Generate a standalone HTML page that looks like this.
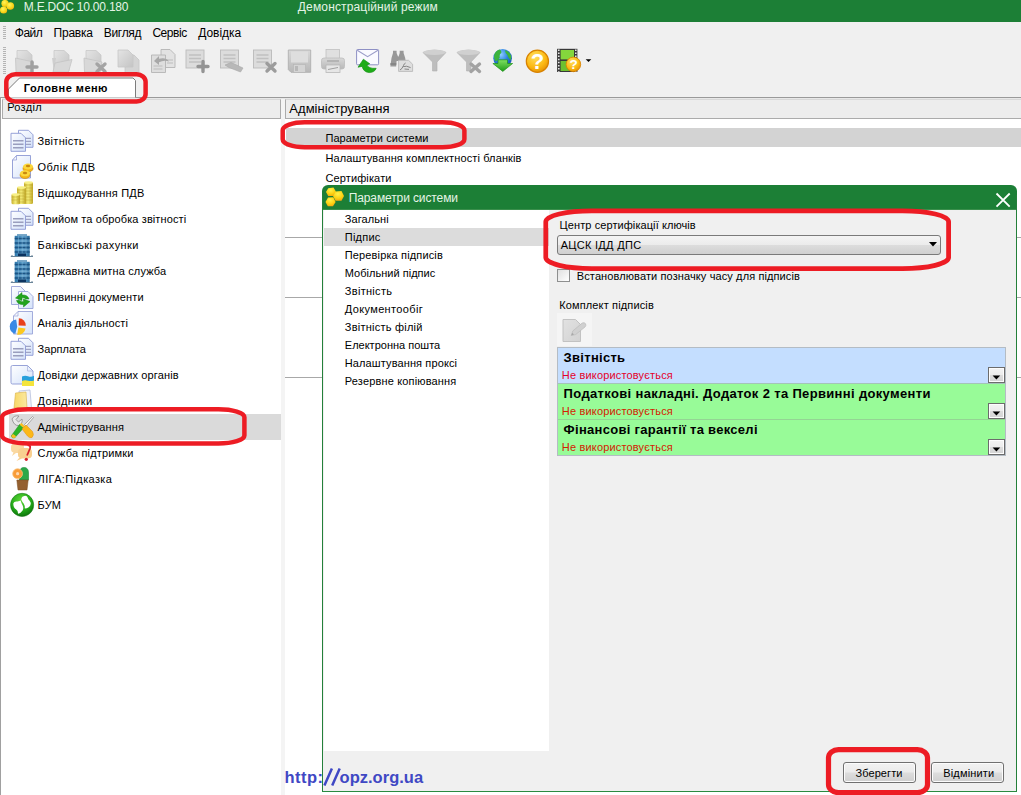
<!DOCTYPE html>
<html><head><meta charset="utf-8"><title>M.E.DOC</title>
<style>
html,body{margin:0;padding:0;background:#fff;}
body{width:1021px;height:795px;overflow:hidden;font-family:"Liberation Sans",sans-serif;}
#root{position:relative;width:1021px;height:795px;overflow:hidden;background:#f0f0f0;}
#root div,#root svg{position:absolute;}
.t{position:absolute;white-space:pre;line-height:1;font-family:"Liberation Sans",sans-serif;}
.btn{box-sizing:border-box;border:1px solid #707070;border-radius:3px;background:linear-gradient(#f2f2f2 0%,#ebebeb 48%,#dddddd 52%,#cfcfcf 100%);box-shadow:inset 0 0 0 1px #fcfcfc;}
.dd{width:17px;height:16px;box-sizing:border-box;border:1px solid #6c6c6c;background:linear-gradient(#f4f4f4 0%,#ececec 48%,#dcdcdc 52%,#d4d4d4 100%);box-shadow:inset 0 0 0 1px #fdfdfd;}

</style></head><body>
<div id="root">
<!-- title bar -->
<div style="left:0;top:0;width:1021px;height:22px;background:#1c7f36"></div>
<!-- tab row line + headers -->
<div style="left:0;top:97px;width:1021px;height:1px;background:#9a9a9a"></div>
<div style="left:0;top:98px;width:1021px;height:1px;background:#e8e8e8"></div>
<div style="left:0;top:97px;width:1px;height:698px;background:#a0a0a0"></div>
<div style="left:1px;top:98px;width:1px;height:697px;background:#fff"></div>
<!-- left panel -->
<div style="left:2px;top:99px;width:279px;height:696px;background:#fff"></div>
<div style="left:2px;top:99px;width:279px;height:20px;background:#ededed;border:1px solid #ababab;border-top-color:#d8d8d8;box-sizing:border-box"></div>
<div style="left:9px;top:414px;width:273px;height:26px;background:#dadada"></div>
<!-- splitter -->
<div style="left:281px;top:99px;width:4px;height:696px;background:#f4f4f4"></div>
<!-- right panel -->
<div style="left:285px;top:99px;width:736px;height:696px;background:#fff"></div>
<div style="left:285px;top:99px;width:737px;height:20px;background:#ededed;border:1px solid #ababab;border-top-color:#d8d8d8;box-sizing:border-box"></div>
<div style="left:286px;top:128px;width:735px;height:19px;background:#d3d3d3"></div>
<div style="left:285px;top:237px;width:736px;height:1px;background:#a8a8a8"></div>
<div style="left:285px;top:297px;width:736px;height:1px;background:#a8a8a8"></div>
<div style="left:285px;top:377px;width:736px;height:1px;background:#a8a8a8"></div>
<!-- tab -->
<svg style="left:6px;top:76px" width="134" height="24" viewBox="0 0 134 24"><path d="M2.5 21.5 L2.5 13 L13.5 2 L127 2 L129.5 4.5 L129.5 21.5 Z" fill="#fff"/><path d="M2.5 21.5 L2.5 13 L13.5 2 L127 2 L129.5 4.5 L129.5 21.5" fill="none" stroke="#7c7c7c" stroke-width="1"/></svg>
<!-- dialog -->
<div style="left:322px;top:185px;width:695px;height:607px;background:#f0f0f0;border-radius:6px 6px 0 0"></div>
<div style="left:322px;top:185px;width:695px;height:25px;background:#1c7f36;border-radius:6px 6px 0 0"></div>
<div style="left:322px;top:209px;width:695px;height:1px;background:#3a8f4c"></div>
<div style="left:322px;top:195px;width:1px;height:597px;background:#24803a"></div>
<div style="left:1016px;top:195px;width:1px;height:597px;background:#24803a"></div>
<div style="left:322px;top:791px;width:695px;height:1px;background:#2a8a40"></div>
<div style="left:324px;top:210px;width:225px;height:541px;background:#fff"></div>
<div style="left:324px;top:228px;width:225px;height:18px;background:#dcdcdc"></div>
<div style="left:322px;top:792px;width:699px;height:3px;background:#fff"></div>
<!-- dialog logo -->
<svg style="left:324px;top:186px" width="22" height="22" viewBox="324 186 22 22">
<defs><radialGradient id="hg2" cx="0.45" cy="0.3" r="0.85"><stop offset="0" stop-color="#fff24a"/><stop offset="0.55" stop-color="#fcd010"/><stop offset="1" stop-color="#f09010"/></radialGradient></defs>
<path d="M328.2 188.2 L333.5 187.6 L336 191.8 L333.6 196 L328.2 196 L326 192 Z" fill="url(#hg2)"/>
<path d="M335.5 191.5 L341.5 191 L344 196 L341.5 200.8 L335.5 200.8 L333 196 Z" fill="url(#hg2)"/>
<path d="M328 197.5 L333.3 197.3 L335.6 202 L333 206.3 L327.8 206.3 L325.5 202 Z" fill="url(#hg2)"/>
</svg>
<!-- close X -->
<svg style="left:994px;top:191px" width="18" height="18" viewBox="994 191 18 18"><path d="M996.5 193.5 L1009.7 206.7 M1009.7 193.5 L996.5 206.7" stroke="#fff" stroke-width="1.8" fill="none"/></svg>
<!-- combo -->
<div style="left:557px;top:235px;width:384px;height:20px;box-sizing:border-box;border:1px solid #7a7a7a;border-radius:3px;background:linear-gradient(#f4f4f4 0%,#ebebeb 50%,#dcdcdc 51%,#d0d0d0 100%)"></div>
<svg style="left:928px;top:241px" width="10" height="7" viewBox="0 0 10 7"><path d="M1 1 L9 1 L5 5.5 Z" fill="#000"/></svg>
<!-- checkbox -->
<div style="left:557px;top:269px;width:13px;height:13px;box-sizing:border-box;border:1px solid #8e8f8f;background:linear-gradient(135deg,#e0e0e0,#fff)"></div>
<!-- icon button -->
<div style="left:557px;top:313px;width:35px;height:33px;background:#f5f5f5"></div>
<svg style="left:560px;top:316px" width="30" height="28" viewBox="560 316 30 28">
<defs><linearGradient id="pg" x1="0" y1="0" x2="1" y2="1"><stop offset="0" stop-color="#e2e2e2"/><stop offset="1" stop-color="#d2d2d2"/></linearGradient></defs>
<path d="M563 319.5 L575.5 319.5 L580.5 324.5 L580.5 341.5 L563 341.5 Z" fill="url(#pg)" stroke="#c2c2c2" stroke-width="1"/>
<path d="M571.2 335.6 L572.8 331 L582.2 323 Q584.4 322 585.6 323.8 Q586.4 325.6 585 327 L575.6 334.6 Z" fill="#d0d0d0" stroke="#bababa" stroke-width="0.7"/>
<path d="M571.2 335.6 L572.2 332.8 L574 334.6 Z" fill="#a8a8a8"/>
</svg>
<!-- table -->
<div style="left:557px;top:347px;width:449px;height:109px;background:#b4bcc4"></div>
<div style="left:558px;top:348px;width:447px;height:35px;background:#c4deff"></div>
<div style="left:558px;top:383px;width:447px;height:36px;background:#98fb98"></div>
<div style="left:558px;top:419px;width:447px;height:36px;background:#98fb98"></div>
<div style="left:558px;top:383px;width:447px;height:1px;background:#a4c4b8"></div>
<div style="left:558px;top:419px;width:447px;height:1px;background:#94d494"></div>
<div class="dd" style="left:988px;top:367px"></div><svg style="left:992px;top:374.5px" width="9" height="6" viewBox="0 0 9 6"><path d="M0.6 0.5 L8.2 0.5 L4.4 4.6 Z" fill="#000"/></svg>
<div class="dd" style="left:988px;top:403px"></div><svg style="left:992px;top:410.5px" width="9" height="6" viewBox="0 0 9 6"><path d="M0.6 0.5 L8.2 0.5 L4.4 4.6 Z" fill="#000"/></svg>
<div class="dd" style="left:988px;top:439px"></div><svg style="left:992px;top:446.5px" width="9" height="6" viewBox="0 0 9 6"><path d="M0.6 0.5 L8.2 0.5 L4.4 4.6 Z" fill="#000"/></svg>
<!-- buttons -->
<div class="btn" style="left:843px;top:762px;width:73px;height:21px"></div>
<div class="btn" style="left:931px;top:762px;width:73px;height:21px"></div>
<!-- grips -->
<div style="left:3px;top:26px;width:3px;height:14px;background:repeating-linear-gradient(#b4b4b4 0 1px,#f0f0f0 1px 2px)"></div>
<div style="left:3px;top:47px;width:3px;height:27px;background:repeating-linear-gradient(#b4b4b4 0 1px,#f0f0f0 1px 2px)"></div>
<!-- app logo -->
<svg style="left:0;top:0" width="20" height="16" viewBox="0 0 20 16">
<defs><radialGradient id="hg" cx="0.4" cy="0.35" r="0.8"><stop offset="0" stop-color="#fff45a"/><stop offset="0.6" stop-color="#f8d416"/><stop offset="1" stop-color="#e89a10"/></radialGradient></defs>
<circle cx="5" cy="3.5" r="3.6" fill="url(#hg)"/><circle cx="10.3" cy="6" r="3.8" fill="url(#hg)"/><circle cx="3.6" cy="10" r="3.6" fill="url(#hg)"/>
</svg>
<!-- toolbar icons -->
<svg style="left:0;top:44px" width="620" height="34" viewBox="0 44 620 34">
<defs>
<linearGradient id="gg" x1="0" y1="0" x2="1" y2="1"><stop offset="0" stop-color="#e4e4e4"/><stop offset="1" stop-color="#c4c4c4"/></linearGradient>
<linearGradient id="gg2" x1="0" y1="0" x2="0" y2="1"><stop offset="0" stop-color="#d8d8d8"/><stop offset="1" stop-color="#b8b8b8"/></linearGradient>
<radialGradient id="yel" cx="0.4" cy="0.3" r="0.8"><stop offset="0" stop-color="#ffe060"/><stop offset="0.6" stop-color="#fcb812"/><stop offset="1" stop-color="#e08800"/></radialGradient>
<radialGradient id="glb" cx="0.4" cy="0.3" r="0.8"><stop offset="0" stop-color="#8fd0ff"/><stop offset="0.5" stop-color="#2a7fe0"/><stop offset="1" stop-color="#1448a8"/></radialGradient>
<linearGradient id="grn" x1="0" y1="0" x2="0" y2="1"><stop offset="0" stop-color="#7fe060"/><stop offset="1" stop-color="#1f9c18"/></linearGradient>
</defs>
<!-- 1 folder-doc plus -->
<g>
<path d="M17 50.5 L27 50.5 L32 55 L32 71 L17 71 Z" fill="url(#gg)" stroke="#c8c8c8" stroke-width="0.8"/>
<path d="M15.5 58 L33.5 62 L31 72 L16 72 Z" fill="#d8d8d8" stroke="#c4c4c4" stroke-width="0.8"/>
<path d="M32 62 L32 72 M27 67 L37 67" stroke="#a0a0a0" stroke-width="3.4" stroke-linecap="round"/>
</g>
<!-- 2 folder open -->
<g>
<path d="M54 50.5 L64 50.5 L69 55 L69 71 L54 71 Z" fill="url(#gg)" stroke="#c8c8c8" stroke-width="0.8"/>
<path d="M52 58 L56 58 L54 72 Z" fill="#cfcfcf"/>
<path d="M55 63 L72 59.5 L68.5 72 L53 72 Z" fill="#d8d8d8" stroke="#c4c4c4" stroke-width="0.8"/>
</g>
<!-- 3 folder x -->
<g>
<path d="M86 50.5 L96 50.5 L101 55 L101 71 L86 71 Z" fill="url(#gg)" stroke="#c8c8c8" stroke-width="0.8"/>
<path d="M84 58 L102 62 L100 72 L84.5 72 Z" fill="#d8d8d8" stroke="#c4c4c4" stroke-width="0.8"/>
<path d="M97 64 L105 71.5 M105 64 L97 71.5" stroke="#a4a4a4" stroke-width="3.4" stroke-linecap="round"/>
</g>
<!-- 4 docs -->
<g>
<path d="M125 55 L134 55 L139 60 L139 73 L125 73 Z" fill="#d4d4d4" stroke="#c6c6c6" stroke-width="0.8"/>
<path d="M118 50 L128 50 L133 55 L133 67 L118 67 Z" fill="url(#gg)" stroke="#c6c6c6" stroke-width="0.8"/>
</g>
<!-- 5 docs with arrow -->
<g>
<path d="M161 49.5 L170 49.5 L175 54.5 L175 67.5 L161 67.5 Z" fill="#e2e2e2" stroke="#b4b4b4" stroke-width="0.9"/>
<path d="M151.5 55 L165.5 55 L165.5 72.5 L151.5 72.5 Z" fill="#dedede" stroke="#b4b4b4" stroke-width="0.9"/>
<path d="M153.5 66 h9 M153.5 69 h9 M167 60 h6 M167 63 h6" stroke="#bcbcbc" stroke-width="1"/>
<path d="M154 61 L159 56 L159 58.8 Q166 57 169 61.5 Q164 59.5 159 62.2 L159 65 Z" fill="#a8a8a8"/>
</g>
<!-- 6 list plus -->
<g>
<rect x="186" y="50" width="18" height="18" fill="#dcdcdc" stroke="#bababa" stroke-width="0.9"/>
<path d="M189 55 h12 M189 58.5 h12 M189 62 h12" stroke="#c0c0c0" stroke-width="1.4"/>
<path d="M203 61.5 L203 71.5 M198 66.5 L208 66.5" stroke="#949494" stroke-width="3.4" stroke-linecap="round"/>
</g>
<!-- 7 list pencil -->
<g>
<rect x="220.5" y="50" width="18" height="18" fill="#dcdcdc" stroke="#bababa" stroke-width="0.9"/>
<path d="M223.5 55 h12 M223.5 58.5 h12 M223.5 62 h12" stroke="#c0c0c0" stroke-width="1.4"/>
<path d="M225 65 L231 62.5 L243 68 L240.5 72 L229 67.5 Z" fill="#b8b8b8" stroke="#a8a8a8" stroke-width="0.6"/>
</g>
<!-- 8 list x -->
<g>
<rect x="253.5" y="50" width="18" height="18" fill="#dcdcdc" stroke="#bababa" stroke-width="0.9"/>
<path d="M256.5 55 h12 M256.5 58.5 h12 M256.5 62 h12" stroke="#c0c0c0" stroke-width="1.4"/>
<path d="M267 63.5 L275 71 M275 63.5 L267 71" stroke="#9c9c9c" stroke-width="3.4" stroke-linecap="round"/>
</g>
<!-- 9 floppy -->
<g>
<path d="M288.3 50 L310.7 50 L310.7 72.3 L291 72.3 L288.3 69.6 Z" fill="url(#gg2)" stroke="#b0b0b0" stroke-width="0.9"/>
<rect x="291" y="51.5" width="17" height="11" fill="#dedede"/>
<rect x="293.5" y="64.5" width="12" height="7.8" fill="#d4d4d4" stroke="#b4b4b4" stroke-width="0.6"/>
<rect x="295" y="66" width="3" height="5" fill="#b8b8b8"/>
</g>
<!-- 10 printer -->
<g>
<rect x="326" y="49.5" width="13.5" height="9" fill="#e0e0e0" stroke="#c0c0c0" stroke-width="0.8"/>
<rect x="321.5" y="58" width="23" height="11" rx="2.5" fill="url(#gg2)" stroke="#bcbcbc" stroke-width="0.8"/>
<rect x="327" y="60" width="12" height="2" fill="#b4b4b4"/>
<rect x="326" y="65" width="14" height="7.5" fill="#e6e6e6" stroke="#b8b8b8" stroke-width="0.8"/>
<path d="M328 69.5 L338 67.5" stroke="#a0a0a0" stroke-width="1"/>
</g>
<!-- 11 mail -->
<g>
<rect x="356.6" y="49.5" width="22" height="15.3" rx="1" fill="#fafaff" stroke="#8e90c4" stroke-width="1"/>
<path d="M357.2 50.3 L367.6 56.6 L378 50.3" fill="none" stroke="#9a9cc8" stroke-width="1.1"/>
<path d="M363.4 59.2 L369.8 63.8 L366.9 64.9 Q368.6 68.8 376.2 68.3 Q374.6 72.6 369 72.6 Q363.4 72 362.1 66.4 L358 67.2 Z" fill="#1eac18" stroke="#0f8c10" stroke-width="0.6"/>
</g>
<!-- 12 binoculars -->
<g>
<path d="M390.3 66.5 L391.5 58 L393 53 L393 50.8 L396.6 50.8 L396.6 53 L398 56.5 L398.6 56.5 L399.7 53 L399.7 50.8 L403.6 50.8 L403.6 53 L405.2 58 L406.3 66.5 L400.2 66.5 L399.8 61 L396.6 61 L396.2 66.5 Z" fill="#989898"/>
<path d="M390.3 64 h6 M400.2 64 h6" stroke="#808080" stroke-width="1.6"/>
<path d="M398.6 60.3 L408.5 60.3 L412.6 64.2 L412.6 71.4 L398.6 71.4 Z" fill="#dedede" stroke="#b4b4b4" stroke-width="0.8"/>
<path d="M400 70 Q402.2 69 403.5 65.5 Q404 63.6 405.6 63 M403.2 66.6 Q406.4 65.4 410.6 67.6 M404.5 69 L409 69.4" fill="none" stroke="#7c7c7c" stroke-width="0.9"/>
</g>
<!-- 13 funnel -->
<g>
<path d="M423 52.5 Q434.5 47.5 446 52.5 L437 62 L437 71 L432.5 71 L432.5 62 Z" fill="#bebebe" stroke="#b0b0b0" stroke-width="0.6"/>
<ellipse cx="434.5" cy="52.3" rx="11.3" ry="2.6" fill="#d0d0d0"/>
</g>
<!-- 14 funnel x -->
<g>
<path d="M457 52.5 Q468.5 47.5 480 52.5 L471 62 L471 71 L466.5 71 L466.5 62 Z" fill="#bebebe" stroke="#b0b0b0" stroke-width="0.6"/>
<ellipse cx="468.5" cy="52.3" rx="11.3" ry="2.6" fill="#d0d0d0"/>
<path d="M471 64 L479.5 71.5 M479.5 64 L471 71.5" stroke="#a2a2a2" stroke-width="3.4" stroke-linecap="round"/>
</g>
<!-- 15 globe -->
<g>
<circle cx="502.6" cy="58.2" r="9.3" fill="url(#glb)"/>
<path d="M494.2 55 Q495.5 51 499.5 49.6 Q502 50.5 501.2 53 Q499 54.5 499.8 57.5 Q498 60.5 495.5 61.5 Q493.6 58.5 494.2 55 Z M505 50 Q509.5 51.5 511 55.5 Q511.6 58 510.6 60 Q508 58 507.4 55 Q505 53 505 50 Z" fill="#3cb43c"/>
<path d="M498 59.8 L507.5 59.8 L507.5 63.5 L512.6 63.5 L502.8 71.4 L492.9 63.5 L498 63.5 Z" fill="url(#grn)" stroke="#1c9018" stroke-width="0.7"/>
</g>
<!-- 16 help -->
<g>
<circle cx="537.4" cy="61.2" r="11.1" fill="url(#yel)" stroke="#d88200" stroke-width="1.2"/>
<text x="537.6" y="69.4" font-family="Liberation Sans, sans-serif" font-weight="700" font-size="22" fill="#fff" text-anchor="middle">?</text>
</g>
<!-- 17 film help -->
<g>
<rect x="557.1" y="48.8" width="20.3" height="23.2" fill="#383838"/>
<rect x="560.6" y="50" width="13.4" height="9.4" fill="#84d63c"/>
<rect x="560.6" y="61" width="13.4" height="10" fill="#6cc030"/>
<path d="M558.8 49.4 v22.4 M575.8 49.4 v22.4" stroke="#f0f0f0" stroke-width="1.5" stroke-dasharray="1.5 1.6"/>
<circle cx="573.4" cy="64.4" r="7.3" fill="url(#yel)" stroke="#d88200" stroke-width="0.8"/>
<text x="573.5" y="69.4" font-family="Liberation Sans, sans-serif" font-weight="700" font-size="13.5" fill="#fff" text-anchor="middle">?</text>
</g>
<path d="M585.7 59.2 L591.3 59.2 L588.5 62.1 Z" fill="#000"/>
</svg>
<svg style="left:0;top:124px" width="44" height="400" viewBox="0 124 44 400">
<defs>
<linearGradient id="dg" x1="0" y1="0" x2="1" y2="1"><stop offset="0" stop-color="#ffffff"/><stop offset="1" stop-color="#d4e2fa"/></linearGradient>
<linearGradient id="coin" x1="0" y1="0" x2="1" y2="0"><stop offset="0" stop-color="#c8b030"/><stop offset="0.45" stop-color="#f4ec78"/><stop offset="1" stop-color="#c0a828"/></linearGradient>
<linearGradient id="bld" x1="0" y1="0" x2="1" y2="0"><stop offset="0" stop-color="#2e78ac"/><stop offset="0.6" stop-color="#5c9cc8"/><stop offset="1" stop-color="#2a6c9c"/></linearGradient>
<radialGradient id="gb" cx="0.45" cy="0.3" r="0.75"><stop offset="0" stop-color="#5fd838"/><stop offset="0.6" stop-color="#22a818"/><stop offset="1" stop-color="#0a6c0a"/></radialGradient>
<linearGradient id="fold" x1="0" y1="0" x2="1" y2="0"><stop offset="0" stop-color="#f8d868"/><stop offset="1" stop-color="#fbe9a0"/></linearGradient>


</defs>
<g transform="translate(0,129.8)">
<path d="M18.5 0.5 L28.5 0.5 L33 5 L33 17.5 L18.5 17.5 Z" fill="url(#dg)" stroke="#8c98d4" stroke-width="0.9"/>
<path d="M24 8.5 h7 M24 11.5 h7 M24 14.5 h7" stroke="#a0a4c4" stroke-width="1.2"/>
<path d="M11 3.5 L21 3.5 L25.5 8 L25.5 21.5 L11 21.5 Z" fill="url(#dg)" stroke="#8c98d4" stroke-width="0.9"/>
<path d="M13 11 h10.5 M13 14.5 h10.5 M13 18 h10.5" stroke="#9a9ebe" stroke-width="1.5"/>
</g>
<!-- doc + coins -->
<path d="M16.5 155.5 L30.5 155.5 L30.5 178 L12.5 178 L12.5 160 Z" fill="url(#dg)" stroke="#8c98d4" stroke-width="0.9"/>
<path d="M12.5 160 L16.5 160 L16.5 155.5" fill="none" stroke="#8c98d4" stroke-width="0.7"/>
<ellipse cx="28" cy="168.5" rx="5" ry="3.6" fill="#f4b418" stroke="#c88808" stroke-width="0.6"/>
<ellipse cx="28" cy="166.5" rx="5" ry="3" fill="#fcd83c"/>
<ellipse cx="28" cy="166" rx="2.2" ry="1.2" fill="#c88810"/>
<ellipse cx="25" cy="175" rx="5" ry="3.6" fill="#f4b418" stroke="#c88808" stroke-width="0.6"/>
<ellipse cx="25" cy="173.3" rx="5" ry="3" fill="#fcd83c"/>
<ellipse cx="25" cy="173" rx="2.2" ry="1.2" fill="#c88810"/>
<!-- coin stacks -->
<rect x="24" y="182" width="9" height="22" rx="1.5" fill="url(#coin)"/>
<rect x="17" y="187" width="9" height="17" rx="1.5" fill="url(#coin)"/>
<rect x="11.5" y="194" width="8.5" height="10.3" rx="1.5" fill="url(#coin)"/>
<path d="M24 185 h9 M24 188 h9 M24 191 h9 M24 194 h9 M24 197 h9 M24 200 h9 M17 190 h8 M17 193 h8 M17 196 h8 M17 199 h8 M17 202 h8 M11.5 197 h8 M11.5 200 h8" stroke="#b8a028" stroke-width="0.6" opacity="0.7"/>
<ellipse cx="28.5" cy="182.6" rx="4.5" ry="1.4" fill="#f8f088"/>
<ellipse cx="21.5" cy="187.6" rx="4.5" ry="1.4" fill="#f8f088"/>
<ellipse cx="15.7" cy="194.6" rx="4.2" ry="1.3" fill="#f8f088"/>
<g transform="translate(0,207.8)">
<path d="M18.5 0.5 L28.5 0.5 L33 5 L33 17.5 L18.5 17.5 Z" fill="url(#dg)" stroke="#8c98d4" stroke-width="0.9"/>
<path d="M24 8.5 h7 M24 11.5 h7 M24 14.5 h7" stroke="#a0a4c4" stroke-width="1.2"/>
<path d="M11 3.5 L21 3.5 L25.5 8 L25.5 21.5 L11 21.5 Z" fill="url(#dg)" stroke="#8c98d4" stroke-width="0.9"/>
<path d="M13 11 h10.5 M13 14.5 h10.5 M13 18 h10.5" stroke="#9a9ebe" stroke-width="1.5"/>
</g>
<g transform="translate(0,234)">
<rect x="17" y="0" width="10" height="2" fill="#7aa8c8"/>
<rect x="14.7" y="1.8" width="15" height="20.5" fill="url(#bld)"/>
<path d="M14.7 4.5 h15 M14.7 9 h15 M14.7 13.5 h15 M14.7 18 h15" stroke="#1c5484" stroke-width="1.6"/>
<path d="M14.7 7 h15 M14.7 11.3 h15 M14.7 15.8 h15" stroke="#8cc0e0" stroke-width="0.5"/>
<path d="M18.4 2 v17.5 M22.2 2 v17.5 M26 2 v17.5" stroke="#9accea" stroke-width="0.6" opacity="0.7"/>
<rect x="18" y="19.5" width="8" height="2.8" fill="#0c3460"/>
<path d="M10.8 22.5 H33 M12 21 v1.5 M32 21 v1.5" stroke="#6a8498" stroke-width="1"/>
</g>
<g transform="translate(0,260)">
<rect x="17" y="0" width="10" height="2" fill="#7aa8c8"/>
<rect x="14.7" y="1.8" width="15" height="20.5" fill="url(#bld)"/>
<path d="M14.7 4.5 h15 M14.7 9 h15 M14.7 13.5 h15 M14.7 18 h15" stroke="#1c5484" stroke-width="1.6"/>
<path d="M14.7 7 h15 M14.7 11.3 h15 M14.7 15.8 h15" stroke="#8cc0e0" stroke-width="0.5"/>
<path d="M18.4 2 v17.5 M22.2 2 v17.5 M26 2 v17.5" stroke="#9accea" stroke-width="0.6" opacity="0.7"/>
<rect x="18" y="19.5" width="8" height="2.8" fill="#0c3460"/>
<path d="M10.8 22.5 H33 M12 21 v1.5 M32 21 v1.5" stroke="#6a8498" stroke-width="1"/>
</g>
<!-- doc refresh -->
<path d="M11.5 286.5 L20.5 286.5 L26 292 L26 304.5 L11.5 304.5 Z" fill="url(#dg)" stroke="#9aa4d8" stroke-width="0.9"/>
<path d="M18.5 291.5 L28 291.5 L33 296.5 L33 308.5 L18.5 308.5 Z" fill="url(#dg)" stroke="#9aa4d8" stroke-width="0.9"/>
<path d="M15.5 298 L22 292.5 L22 295 Q27.5 294.5 29 299 L25.5 299 Q24.5 297.5 22 297.8 L22 300.5 Z" fill="#22a41c" stroke="#108810" stroke-width="0.5"/>
<path d="M30 301.5 L23.5 307 L23.5 304.5 Q18 305 16.5 300.5 L20 300.5 Q21 302 23.5 301.7 L23.5 299 Z" fill="#22a41c" stroke="#108810" stroke-width="0.5"/>
<!-- doc pie -->
<path d="M18 311.5 L32.5 311.5 L32.5 334 L13.5 334 L13.5 316 Z" fill="url(#dg)" stroke="#9aa4d8" stroke-width="0.9"/>
<path d="M13.5 316 L18 316 L18 311.5" fill="none" stroke="#9aa4d8" stroke-width="0.7"/>
<path d="M17.2 326.8 L15.28 333.95 A7.4 7.4 0 0 1 16.17 319.47 Z" fill="#3a8ae6"/>
<path d="M18.6 325.4 L18.85 318.20 A7.2 7.2 0 0 1 25.80 325.65 Z" fill="#e8401c"/>
<path d="M18.4 327.6 L25.53 328.60 A7.2 7.2 0 0 1 17.15 334.69 Z" fill="#fcc820"/>
<g transform="translate(0,337.8)">
<path d="M18.5 0.5 L28.5 0.5 L33 5 L33 17.5 L18.5 17.5 Z" fill="url(#dg)" stroke="#8c98d4" stroke-width="0.9"/>
<path d="M24 8.5 h7 M24 11.5 h7 M24 14.5 h7" stroke="#a0a4c4" stroke-width="1.2"/>
<path d="M11 3.5 L21 3.5 L25.5 8 L25.5 21.5 L11 21.5 Z" fill="url(#dg)" stroke="#8c98d4" stroke-width="0.9"/>
<path d="M13 11 h10.5 M13 14.5 h10.5 M13 18 h10.5" stroke="#9a9ebe" stroke-width="1.5"/>
</g>
<!-- doc flag -->
<path d="M12.5 365.5 L27.5 365.5 L33 371 L33 384 L12.5 384 Q11 384 11 382.5 L11 367 Q11 365.5 12.5 365.5 Z" fill="url(#dg)" stroke="#8c98d4" stroke-width="0.9"/>
<path d="M27.5 365.5 L27.5 371 L33 371" fill="none" stroke="#a8b0dc" stroke-width="0.7"/>
<path d="M22 376.5 Q25 375 28 376.2 Q31 377.4 34 375.8 L34 381 L22 381 Z" fill="#28a0dc"/>
<path d="M22 381 Q25 379.8 28 380.8 Q31 381.8 34 380.6 L34 386 L22 386 Z" fill="#f4e43c"/>
<!-- folder -->
<path d="M19 391 L30 390 L31.5 408 L20 408 Z" fill="#f0f2fa" stroke="#b8c0dc" stroke-width="0.8"/>
<path d="M15.5 393 L26 392 L27 408 L14 408 Z" fill="url(#fold)" stroke="#d8b048" stroke-width="0.6"/>
<!-- tools -->
<path d="M12 419 Q14 415 19 416 L16 419.5 L18.5 422 L22 419 Q23 424 18.5 425.5 Q14 426 12 419 Z" fill="#e8e8e8" stroke="#8c8c8c" stroke-width="0.8"/>
<path d="M24.5 424.5 L32.5 416.5 L33.5 417.5 L26 426.5 Z" fill="#f4f4f4" stroke="#8c8c8c" stroke-width="0.7"/>
<path d="M19.5 424.5 L23.5 428 L14.5 438 Q12 438.5 11.2 436 Z" fill="#2cb428" stroke="#1c8c18" stroke-width="0.5"/>
<path d="M14.5 438 Q12 438.5 11.2 436 L13 434 L16.2 436.2 Z" fill="#f8c020"/>
<path d="M19.5 424.5 L21.5 423 L25 426.5 L23.5 428 Z" fill="#f8c020"/>
<path d="M22 429 L26 425 L32.5 431.5 Q34.5 435 32 437.5 Q29.5 438.5 27.5 436 Z" fill="#fcb818" stroke="#e09010" stroke-width="0.5"/>
<!-- support -->
<path d="M11 447 Q11 443 16 443 L20 443 Q24 443 24 447 L24 450 Q24 453 20 453 L16 453 L12 456 L13.5 452.5 Q11 452 11 449 Z" fill="#fad8a0"/>
<path d="M18 452 Q18 448 23 448 L27 448 Q32 448 32 452 L32 455 Q32 458.5 27 458.5 L22 458.5 L16.5 461 L19.5 457.5 Q18 457 18 455 Z" fill="#f8d090"/>
<path d="M27.5 445 Q31 445 30 448.5 Q28.5 452 27 455.5" fill="none" stroke="#d8202c" stroke-width="1.8"/>
<circle cx="26.3" cy="459.3" r="1.6" fill="#d8202c"/>
<!-- cactus -->
<path d="M19.5 480 L19.5 473 Q19.5 467.5 24 467.5 Q28.5 467.5 28.5 473 L28.5 480 Z" fill="#2ca848" stroke="#1c8838" stroke-width="0.6"/>
<circle cx="17.6" cy="473.7" r="4.9" fill="#f89c38" stroke="#f8c078" stroke-width="0.8"/>
<circle cx="17.6" cy="473.7" r="1.6" fill="#fcd8b0"/>
<path d="M16.8 480 L28.2 480 L27 490 L18 490 Z" fill="#946030" stroke="#7c4c20" stroke-width="0.5"/>
<!-- green ball -->
<circle cx="22.1" cy="504.9" r="11.6" fill="url(#gb)" stroke="#0c6c0c" stroke-width="0.5"/>
<path d="M13.3 503.4 Q14 501.3 16.5 501.4 Q19.5 501.6 20.6 500.6 Q21.2 503 22.6 505.2 Q24 508 22.6 510.6 Q21 513.2 18 513.8 Q18.2 511 16.2 509.6 Q13.2 507.4 13.3 503.4 Z" fill="#fff"/>
<path d="M21.2 499.4 Q21.6 496.2 25.2 495.8 Q27.2 495.8 27.6 497.6 Q28 499.6 29.6 500.8 Q31.4 502.6 30.4 505.2 Q29 508.2 24.8 508.6 Q25.2 506 23.8 503.8 Q22 501.4 21.2 499.4 Z" fill="#fff"/>
</svg>

<!-- url slashes -->
<svg style="left:320px;top:765px" width="22" height="24" viewBox="320 765 22 24"><path d="M324.4 785.6 L331.9 768.6 M332.2 785.6 L339.7 768.6" stroke="#3f48c4" stroke-width="2.5" fill="none"/></svg>
<!-- red annotations -->
<svg style="left:0;top:0" width="1021" height="795" viewBox="0 0 1021 795" fill="none" stroke="#ed1c24" stroke-width="4.5">
<rect x="6.3" y="74.3" width="139.3" height="27.2" rx="9" ry="7.5"/>
<rect x="282.7" y="122.2" width="181.7" height="25.1" rx="22" ry="8"/>
<rect x="2" y="409.3" width="242.4" height="34.2" rx="26" ry="8"/>
<rect x="545.8" y="210.8" width="402.8" height="57.8" rx="46" ry="11" stroke-width="4.8"/>
<rect x="828.5" y="749.6" width="99" height="43" rx="10" ry="8" stroke-width="5.2"/>
</svg>

<span class="t" style="left:23.8px;top:0.54px;font-size:12px;font-weight:400;color:#e4f4e6;letter-spacing:-0.210px;">M.E.DOC 10.00.180</span>
<span class="t" style="left:297.8px;top:0.54px;font-size:12px;font-weight:400;color:#e4f4e6;letter-spacing:0.152px;">Демонстраційний режим</span>
<span class="t" style="left:14.8px;top:26.74px;font-size:12px;font-weight:400;color:#000;letter-spacing:-0.529px;">Файл</span>
<span class="t" style="left:53.6px;top:26.74px;font-size:12px;font-weight:400;color:#000;letter-spacing:-0.258px;">Правка</span>
<span class="t" style="left:103.8px;top:26.74px;font-size:12px;font-weight:400;color:#000;letter-spacing:-0.321px;">Вигляд</span>
<span class="t" style="left:152.4px;top:26.74px;font-size:12px;font-weight:400;color:#000;letter-spacing:-0.444px;">Сервіс</span>
<span class="t" style="left:198.2px;top:26.74px;font-size:12px;font-weight:400;color:#000;letter-spacing:-0.025px;">Довідка</span>
<span class="t" style="left:23.8px;top:82.89px;font-size:11px;font-weight:700;color:#000;letter-spacing:0.468px;">Головне меню</span>
<span class="t" style="left:7.2px;top:101.69px;font-size:11px;font-weight:400;color:#000;letter-spacing:0.294px;">Розділ</span>
<span class="t" style="left:289.3px;top:102.20px;font-size:13px;font-weight:400;color:#000;letter-spacing:0.041px;">Адміністрування</span>
<span class="t" style="left:37.6px;top:135.89px;font-size:11px;font-weight:400;color:#000;letter-spacing:0.270px;">Звітність</span>
<span class="t" style="left:37.6px;top:161.89px;font-size:11px;font-weight:400;color:#000;letter-spacing:0.456px;">Облік ПДВ</span>
<span class="t" style="left:37.6px;top:187.89px;font-size:11px;font-weight:400;color:#000;letter-spacing:0.203px;">Відшкодування ПДВ</span>
<span class="t" style="left:37.6px;top:213.89px;font-size:11px;font-weight:400;color:#000;letter-spacing:0.101px;">Прийом та обробка звітності</span>
<span class="t" style="left:37.6px;top:239.89px;font-size:11px;font-weight:400;color:#000;letter-spacing:0.389px;">Банківські рахунки</span>
<span class="t" style="left:37.6px;top:265.89px;font-size:11px;font-weight:400;color:#000;letter-spacing:0.155px;">Державна митна служба</span>
<span class="t" style="left:37.6px;top:291.89px;font-size:11px;font-weight:400;color:#000;letter-spacing:0.146px;">Первинні документи</span>
<span class="t" style="left:37.6px;top:317.89px;font-size:11px;font-weight:400;color:#000;letter-spacing:0.103px;">Аналіз діяльності</span>
<span class="t" style="left:37.6px;top:343.89px;font-size:11px;font-weight:400;color:#000;letter-spacing:0.029px;">Зарплата</span>
<span class="t" style="left:37.6px;top:369.89px;font-size:11px;font-weight:400;color:#000;letter-spacing:0.142px;">Довідки державних органів</span>
<span class="t" style="left:37.6px;top:395.89px;font-size:11px;font-weight:400;color:#000;letter-spacing:0.369px;">Довідники</span>
<span class="t" style="left:37.6px;top:421.89px;font-size:11px;font-weight:400;color:#000;letter-spacing:0.156px;">Адміністрування</span>
<span class="t" style="left:37.6px;top:447.89px;font-size:11px;font-weight:400;color:#000;letter-spacing:0.161px;">Служба підтримки</span>
<span class="t" style="left:37.6px;top:473.89px;font-size:11px;font-weight:400;color:#000;letter-spacing:0.360px;">ЛІГА:Підказка</span>
<span class="t" style="left:37.6px;top:499.89px;font-size:11px;font-weight:400;color:#000;letter-spacing:0.092px;">БУМ</span>
<span class="t" style="left:325.4px;top:132.89px;font-size:11px;font-weight:400;color:#000;letter-spacing:0.081px;">Параметри системи</span>
<span class="t" style="left:325.4px;top:152.89px;font-size:11px;font-weight:400;color:#000;letter-spacing:0.126px;">Налаштування комплектності бланків</span>
<span class="t" style="left:325.4px;top:172.89px;font-size:11px;font-weight:400;color:#000;letter-spacing:0.133px;">Сертифікати</span>
<span class="t" style="left:348.7px;top:192.04px;font-size:12px;font-weight:400;color:#e6f5e8;letter-spacing:-0.110px;">Параметри системи</span>
<span class="t" style="left:344.8px;top:213.89px;font-size:11px;font-weight:400;color:#000;letter-spacing:0.084px;">Загальні</span>
<span class="t" style="left:344.8px;top:231.89px;font-size:11px;font-weight:400;color:#000;letter-spacing:0.221px;">Підпис</span>
<span class="t" style="left:344.8px;top:249.89px;font-size:11px;font-weight:400;color:#000;letter-spacing:0.138px;">Перевірка підписів</span>
<span class="t" style="left:344.8px;top:267.89px;font-size:11px;font-weight:400;color:#000;letter-spacing:0.022px;">Мобільний підпис</span>
<span class="t" style="left:344.8px;top:285.89px;font-size:11px;font-weight:400;color:#000;letter-spacing:0.304px;">Звітність</span>
<span class="t" style="left:344.8px;top:303.89px;font-size:11px;font-weight:400;color:#000;letter-spacing:0.356px;">Документообіг</span>
<span class="t" style="left:344.8px;top:321.89px;font-size:11px;font-weight:400;color:#000;letter-spacing:0.238px;">Звітність філій</span>
<span class="t" style="left:344.8px;top:339.89px;font-size:11px;font-weight:400;color:#000;letter-spacing:0.004px;">Електронна пошта</span>
<span class="t" style="left:344.8px;top:357.89px;font-size:11px;font-weight:400;color:#000;letter-spacing:0.113px;">Налаштування проксі</span>
<span class="t" style="left:344.8px;top:375.89px;font-size:11px;font-weight:400;color:#000;letter-spacing:0.157px;">Резервне копіювання</span>
<span class="t" style="left:559.6px;top:219.89px;font-size:11px;font-weight:400;color:#000;letter-spacing:0.083px;">Центр сертифікації ключів</span>
<span class="t" style="left:560.7px;top:239.89px;font-size:11px;font-weight:400;color:#000;letter-spacing:0.291px;">АЦСК ІДД ДПС</span>
<span class="t" style="left:576.8px;top:270.89px;font-size:11px;font-weight:400;color:#000;letter-spacing:0.110px;">Встановлювати позначку часу для підписів</span>
<span class="t" style="left:559.2px;top:299.89px;font-size:11px;font-weight:400;color:#000;letter-spacing:0.140px;">Комплект підписів</span>
<span class="t" style="left:563.6px;top:351.20px;font-size:13px;font-weight:700;color:#000;letter-spacing:0.292px;">Звітність</span>
<span class="t" style="left:563.6px;top:387.20px;font-size:13px;font-weight:700;color:#000;letter-spacing:0.340px;">Податкові накладні. Додаток 2 та Первинні документи</span>
<span class="t" style="left:563.6px;top:423.20px;font-size:13px;font-weight:700;color:#000;letter-spacing:0.287px;">Фінансові гарантії та векселі</span>
<span class="t" style="left:561.8px;top:369.89px;font-size:11px;font-weight:400;color:#e4002b;letter-spacing:0.173px;">Не використовується</span>
<span class="t" style="left:561.8px;top:405.89px;font-size:11px;font-weight:400;color:#d42000;letter-spacing:0.173px;">Не використовується</span>
<span class="t" style="left:561.8px;top:441.89px;font-size:11px;font-weight:400;color:#d42000;letter-spacing:0.173px;">Не використовується</span>
<span class="t" style="left:855.4px;top:767.89px;font-size:11px;font-weight:400;color:#000;letter-spacing:0.103px;">Зберегти</span>
<span class="t" style="left:943.2px;top:767.89px;font-size:11px;font-weight:400;color:#000;letter-spacing:0.177px;">Відмінити</span>
<span class="t" style="left:284.4px;top:769.03px;font-size:16.5px;font-weight:700;color:#3f48c4;letter-spacing:0.509px;">http:</span>
<span class="t" style="left:339.6px;top:769.03px;font-size:16.5px;font-weight:700;color:#3f48c4;letter-spacing:0.008px;">opz.org.ua</span>
</div>
</body></html>
